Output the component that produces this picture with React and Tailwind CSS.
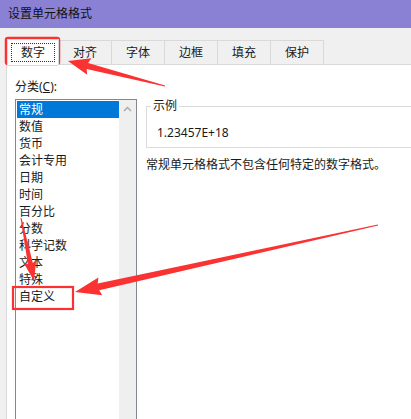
import React from "react";

function arrowPoints(tx, ty, hx, hy, tailW, shaftW, headW, headL) {
  const dx = hx - tx, dy = hy - ty;
  const len = Math.hypot(dx, dy);
  const ux = dx / len, uy = dy / len;
  const px = -uy, py = ux;
  const bx = hx - ux * headL, by = hy - uy * headL;
  const pts = [
    [tx + px * tailW / 2, ty + py * tailW / 2],
    [bx + px * shaftW / 2, by + py * shaftW / 2],
    [bx + px * headW / 2 - ux * 2, by + py * headW / 2 - uy * 2],
    [hx, hy],
    [bx - px * headW / 2 - ux * 2, by - py * headW / 2 - uy * 2],
    [bx - px * shaftW / 2, by - py * shaftW / 2],
    [tx - px * tailW / 2, ty - py * tailW / 2],
  ];
  return pts.map((p) => p[0].toFixed(1) + "," + p[1].toFixed(1)).join(" ");
}

const items = ["常规", "数值", "货币", "会计专用", "日期", "时间", "百分比", "分数", "科学记数", "文本", "特殊", "自定义"];
const tabs = ["对齐", "字体", "边框", "填充", "保护"];

export default function App() {
  return (
    <div
      className="relative w-[411px] h-[419px] overflow-hidden bg-[#f0f0f0] flex flex-col text-[12px] text-[#1a1a1a]"
      style={{ fontFamily: '"Noto Sans", "Noto Sans CJK SC", sans-serif' }}
    >
      <div className="h-[28px] shrink-0 bg-[#8a80d4] pl-[8px] flex items-center text-[12px] text-[#111]">
        设置单元格格式
      </div>
      <div className="h-[10px] shrink-0" />
      <div className="flex items-end pl-[7px] h-[26px] shrink-0">
        <div className="w-[52px] h-[26px] bg-white border border-b-0 border-[#d9d9d9] p-[3px] relative z-10 -mb-px">
          <div className="w-full h-full border border-dotted border-[#333] flex items-center justify-center">数字</div>
        </div>
        {tabs.map((t) => (
          <div key={t} className="w-[54px] h-[24px] -ml-px border border-b-0 border-[#d9d9d9] bg-[#f0f0f0] flex items-center justify-center">
            {t}
          </div>
        ))}
      </div>
      <div className="flex-1 ml-[6px] bg-white border-l border-t border-[#d9d9d9] flex">
        <div className="flex flex-col pl-[8px] w-[139px] shrink-0">
          <div className="h-[34px] pt-[14px] leading-[16px]">
            分类(<span className="underline">C</span>):
          </div>
          <div className="flex-1 w-[122px] border border-b-0 border-[#828790] flex">
            <div className="flex-1 pt-px pl-px">
              {items.map((it, i) => (
                <div
                  key={it}
                  className={
                    "h-[17px] leading-[17px] pl-[2px] " + (i === 0 ? "bg-[#0078d7] text-white" : "")
                  }
                >
                  {it}
                </div>
              ))}
            </div>
            <div className="w-[17px] bg-[#efefef] flex justify-center pt-[6px]">
              <svg width="9" height="6" viewBox="0 0 9 6">
                <path d="M1 5 L4.5 1.5 L8 5" fill="none" stroke="#a6a6a6" strokeWidth="1.3" />
              </svg>
            </div>
          </div>
        </div>
        <div className="flex-1 min-w-0 pt-[34px]">
          <fieldset className="border border-[#dcdcdc] w-[300px] h-[49px] pl-[4px]">
            <legend className="px-[2px] leading-[14px]">示例</legend>
            <div className="pl-[6px] pt-[13px] leading-[14px]">1.23457E+18</div>
          </fieldset>
          <div className="mt-[9px] leading-[16px] whitespace-nowrap">常规单元格格式不包含任何特定的数字格式。</div>
        </div>
      </div>

      <svg className="absolute left-0 top-0 pointer-events-none" width="411" height="419" viewBox="0 0 411 419">
        <rect x="6" y="38" width="53" height="26" rx="2" fill="none" stroke="#fa3232" strokeWidth="2.5" />
        <rect x="13" y="287" width="60" height="22" fill="none" stroke="#fa3232" strokeWidth="2.2" />
        <polygon points={arrowPoints(165, 86, 68, 61, 1, 6, 17, 20)} fill="#fa3232" />
        <polygon points={arrowPoints(378, 225, 75, 292, 1, 7, 18, 24)} fill="#fa3232" />
        <polygon points={arrowPoints(21, 218, 34, 281, 1, 5, 13, 18)} fill="#fa3232" />
      </svg>
    </div>
  );
}
